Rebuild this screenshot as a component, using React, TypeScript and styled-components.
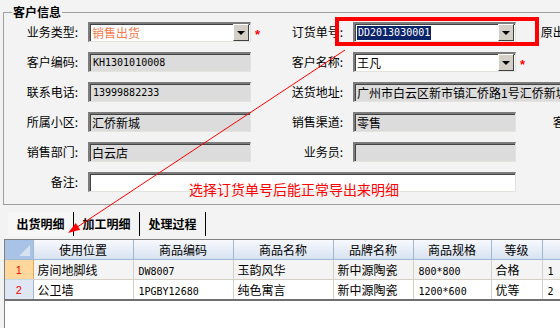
import { createGlobalStyle, styled } from 'styled-components'

const GlobalStyle = createGlobalStyle`
    html, body {
        margin: 0;
        padding: 0;
    }
    body {
        width: 560px;
        height: 328px;
        overflow: hidden;
        background: #f3f3f3;
        font-family: "Noto Sans CJK SC", "Liberation Sans", sans-serif;
        font-size: 12px;
        color: #000;
    }
`

const Page = styled.div`
    position: relative;
    display: flex;
    flex-direction: column;
    height: 328px;
    padding-top: 4px;
    box-sizing: border-box;
`

const Group = styled.fieldset`
    margin: 0 0 0 3px;
    padding: 2px 0 12px 0;
    width: 700px;
    min-width: 0;
    box-sizing: border-box;
    border: 1px solid #a0a0a0;
`

const Legend = styled.legend`
    margin-left: 8px;
    padding: 0 1px;
    font-weight: bold;
    font-size: 12px;
    line-height: 16px;
`

const Form = styled.div`
    display: grid;
    grid-template-columns: 84px 163px 30px 72px 163px 96px;
    grid-auto-rows: 20px;
    row-gap: 10px;
    align-items: center;
`

const columns = { left: 1, right: 4, far: 6 }

const Label = styled.div<{ $col: keyof typeof columns }>`
    grid-column: ${p => columns[p.$col]};
    text-align: right;
    padding-right: ${p => (p.$col === 'far' ? 8 : 10)}px;
    white-space: nowrap;
    line-height: 20px;
`

const Mark = styled.div<{ $col: number }>`
    grid-column: ${p => p.$col};
    padding: 5px 0 0 4px;
    color: #ff0000;
    font-family: "Liberation Sans", sans-serif;
    font-weight: bold;
    font-size: 13px;
    line-height: 15px;
`

const Field = styled.div<{ $gray?: boolean; $col: string }>`
    grid-column: ${p => p.$col};
    display: flex;
    align-items: center;
    height: 20px;
    box-sizing: border-box;
    padding-left: 2px;
    border-style: solid;
    border-width: 2px 1px 1px 2px;
    border-color: #7c7c7c #e4e2dc #e4e2dc #7c7c7c;
    box-shadow: inset 1px 1px 0 #444;
    background: ${p => (p.$gray ? '#dcdcdc' : '#fff')};
    overflow: hidden;
    white-space: nowrap;
`

const Value = styled.span<{ $tone?: string }>`
    color: ${p => p.$tone ?? '#000'};
    line-height: 16px;
`

const Latin = styled.span<{ $selected?: boolean }>`
    font-family: "DejaVu Sans Mono", "Liberation Mono", monospace;
    font-size: 10px;
    line-height: 14px;
    padding: 0 1px;
    background: ${p => (p.$selected ? '#0a246a' : 'transparent')};
    color: ${p => (p.$selected ? '#fff' : '#000')};
`

const DropButton = styled.span`
    margin: 0 1px 0 auto;
    width: 16px;
    height: 100%;
    box-sizing: border-box;
    display: flex;
    align-items: center;
    justify-content: center;
    background: #d4d0c8;
    border: 1px solid;
    border-color: #fff #404040 #404040 #fff;

    &::after {
        content: '';
        border-left: 4px solid transparent;
        border-right: 4px solid transparent;
        border-top: 4px solid #000;
    }
`

const Tabs = styled.div`
    display: flex;
    margin: 7px 0 0 8px;
    height: 24px;
`

const Tab = styled.div<{ $active?: boolean }>`
    width: 65px;
    border-right: 1px solid #000;
    text-align: center;
    line-height: 24px;
    font-weight: bold;
    background: ${p => (p.$active ? '#f7f7f7' : 'transparent')};
`

const GridBox = styled.div`
    flex: 1;
    margin: 3px 0 0 4px;
    border-top: 1px solid #808080;
    border-left: 1px solid #808080;
    background: #fff;
    overflow: hidden;
`

const Table = styled.table`
    border-collapse: collapse;
    table-layout: fixed;
    width: 597px;
    border-bottom: 2px solid #707070;
`

const Col = styled.col<{ $w: number }>`
    width: ${p => p.$w}px;
`

const Th = styled.th`
    height: 19px;
    padding: 0;
    font-weight: normal;
    background: linear-gradient(#f7f9fd, #d7e2f1);
    border-right: 1px solid #9fb8d4;
    border-bottom: 1px solid #9fb8d4;
    white-space: nowrap;
    overflow: hidden;
`

const Corner = styled.th`
    position: relative;
    padding: 0;
    background: #a9c3e7;
    border-right: 1px solid #9fb8d4;
    border-bottom: 1px solid #9fb8d4;

    &::after {
        content: '';
        position: absolute;
        right: 3px;
        bottom: 3px;
        border-left: 11px solid transparent;
        border-bottom: 11px solid #d6e2f2;
    }
`

const RowHead = styled.td<{ $selected?: boolean }>`
    height: 19px;
    padding: 0;
    text-align: center;
    color: #ff0000;
    font-family: "Liberation Sans", sans-serif;
    font-size: 11px;
    background: ${p => (p.$selected ? '#fdd79c' : '#dfe7f4')};
    border-right: 1px solid ${p => (p.$selected ? '#f0a850' : '#9fb8d4')};
    border-bottom: 1px solid #c9d6e8;
`

const Td = styled.td<{ $alt?: boolean }>`
    height: 19px;
    padding: 0 3px 0 4px;
    background: ${p => (p.$alt ? '#f4f4f4' : '#fff')};
    border-right: 1px solid #d4d0c8;
    border-bottom: 1px solid #d4d0c8;
    white-space: nowrap;
    overflow: hidden;
`

const Overlay = styled.svg`
    position: absolute;
    top: 0;
    left: 0;
    pointer-events: none;
`

const Hint = styled.div`
    position: absolute;
    left: 189px;
    top: 181px;
    color: #ff0000;
    font-size: 14px;
    line-height: 16px;
    white-space: nowrap;
    pointer-events: none;
`

const headers = ['使用位置', '商品编码', '商品名称', '品牌名称', '商品规格', '等级', '']
const widths = [28, 100, 100, 100, 80, 78, 51, 60]

const rows = [
    ['房间地脚线', 'DW8007', '玉韵风华', '新中源陶瓷', '800*800', '合格', '1'],
    ['公卫墙', '1PGBY12680', '纯色寓言', '新中源陶瓷', '1200*600', '优等', '2'],
]

const isLatin = (s: string) => /^[\x20-\x7e]+$/.test(s)

export default function App() {
    return (
        <>
            <GlobalStyle />
            <Page>
                <Group>
                    <Legend>客户信息</Legend>
                    <Form>
                        <Label $col="left">业务类型:</Label>
                        <Field $col="2">
                            <Value $tone="#f47c50">销售出货</Value>
                            <DropButton />
                        </Field>
                        <Mark $col={3}>*</Mark>
                        <Label $col="right">订货单号:</Label>
                        <Field $col="5">
                            <Latin $selected>DD2013030001</Latin>
                            <DropButton />
                        </Field>
                        <Label $col="far">原出货单号:</Label>

                        <Label $col="left">客户编码:</Label>
                        <Field $col="2" $gray><Latin>KH1301010008</Latin></Field>
                        <Label $col="right">客户名称:</Label>
                        <Field $col="5">
                            <Value>王凡</Value>
                            <DropButton />
                        </Field>
                        <Mark $col={6}>*</Mark>

                        <Label $col="left">联系电话:</Label>
                        <Field $col="2" $gray><Latin>13999882233</Latin></Field>
                        <Label $col="right">送货地址:</Label>
                        <Field $col="5 / 7" $gray><Value>广州市白云区新市镇汇侨路1号汇侨新城</Value></Field>

                        <Label $col="left">所属小区:</Label>
                        <Field $col="2" $gray><Value>汇侨新城</Value></Field>
                        <Label $col="right">销售渠道:</Label>
                        <Field $col="5" $gray><Value>零售</Value></Field>
                        <Label $col="far">客户类型:</Label>

                        <Label $col="left">销售部门:</Label>
                        <Field $col="2" $gray><Value>白云店</Value></Field>
                        <Label $col="right">业务员:</Label>
                        <Field $col="5" $gray />

                        <Label $col="left">备注:</Label>
                        <Field $col="2 / 6" />
                    </Form>
                </Group>

                <Tabs>
                    <Tab $active>出货明细</Tab>
                    <Tab>加工明细</Tab>
                    <Tab>处理过程</Tab>
                </Tabs>

                <GridBox>
                    <Table>
                        <colgroup>
                            {widths.map((w, i) => <Col key={i} $w={w} />)}
                        </colgroup>
                        <thead>
                            <tr>
                                <Corner />
                                {headers.map((h, i) => <Th key={i}>{h}</Th>)}
                            </tr>
                        </thead>
                        <tbody>
                            {rows.map((row, r) => (
                                <tr key={r}>
                                    <RowHead $selected={r === 0}>{r + 1}</RowHead>
                                    {row.map((cell, c) => (
                                        <Td key={c} $alt={r === 0}>
                                            {isLatin(cell) ? <Latin>{cell}</Latin> : cell}
                                        </Td>
                                    ))}
                                    <Td $alt={r === 0} />
                                </tr>
                            ))}
                        </tbody>
                    </Table>
                </GridBox>

                <Overlay width="560" height="328" viewBox="0 0 560 328">
                    <rect x="337" y="19" width="200" height="25" fill="none" stroke="#ff0000" strokeWidth="4" />
                    <line x1="345" y1="50" x2="75" y2="228.5" stroke="#ff0000" strokeWidth="1" />
                    <polygon points="68,233 80.2,229.7 75.8,223.1" fill="#ff0000" />
                </Overlay>
                <Hint>选择订货单号后能正常导出来明细</Hint>
            </Page>
        </>
    )
}
